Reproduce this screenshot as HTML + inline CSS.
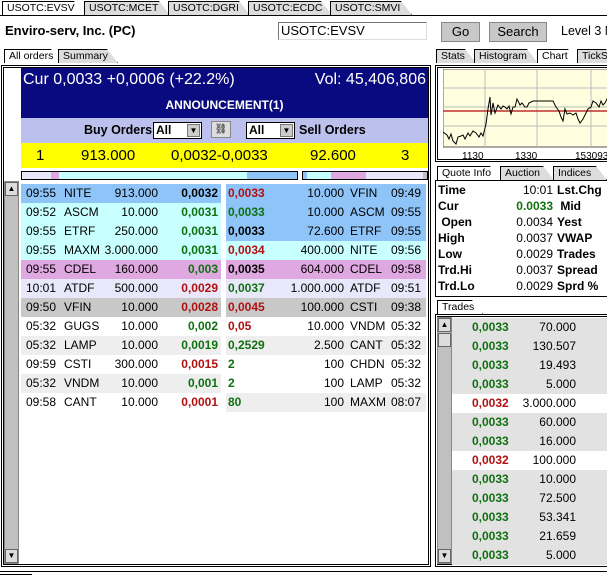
<!DOCTYPE html><html><head><style>
*{margin:0;padding:0;box-sizing:border-box}
body{width:607px;height:576px;overflow:hidden;background:#fff;font-family:"Liberation Sans",sans-serif;font-size:12px;position:relative;color:#000}
.a{position:absolute;white-space:nowrap}
.tab{position:absolute;height:14px;border:1px solid #000;border-bottom:none;background:#ddd;font-size:10.5px;line-height:13px;padding-left:4px;white-space:nowrap;overflow:hidden;clip-path:polygon(0 0,calc(100% - 11px) 0,100% 100%,0 100%)}
.tab.s{background:#fff}
.btn{position:absolute;background:#c8c8c8;border:1px solid #888;font-size:13px;text-align:center;line-height:18px}
.row{position:absolute;height:19px;line-height:19px;font-size:12px;white-space:nowrap}
.row span{position:absolute}
.g{color:#107010;font-weight:bold}.r{color:#b01010;font-weight:bold}.k{font-weight:bold}
.q{position:absolute;left:438px;width:170px;height:16px;line-height:16px;font-size:12px;white-space:nowrap}
.q span{position:absolute}
.t{position:absolute;left:452px;width:155px;height:19px;line-height:19px;font-size:12px;background:#e2e2e2}
.t span{position:absolute}
</style></head><body>
<div class="a" style="left:0;top:15px;width:607px;height:1px;background:#000"></div>
<div class="tab s" style="left:2px;top:1px;width:83px">USOTC:EVSV</div>
<div class="tab" style="left:84px;top:1px;width:86px">USOTC:MCET</div>
<div class="tab" style="left:168px;top:1px;width:82px">USOTC:DGRI</div>
<div class="tab" style="left:248px;top:1px;width:84px">USOTC:ECDC</div>
<div class="tab" style="left:330px;top:1px;width:82px">USOTC:SMVI</div>

<div class="a" style="left:4px;top:21px;width:268px;height:20px;background:#fff;font-weight:bold;font-size:13px;line-height:20px;padding-left:1px">Enviro-serv, Inc. (PC)</div>
<div class="a" style="left:278px;top:22px;width:149px;height:18px;border:1px solid #777;border-right-color:#ddd;border-bottom-color:#ddd;background:#fff;font-size:13px;line-height:16px;padding-left:2px">USOTC:EVSV</div>
<div class="btn" style="left:441px;top:22px;width:39px;height:20px">Go</div>
<div class="btn" style="left:489px;top:22px;width:58px;height:20px">Search</div>
<div class="a" style="left:561px;top:24px;font-size:12.5px">Level 3 M</div>

<div class="tab s" style="left:4px;top:49px;width:58px">All orders</div>
<div class="tab" style="left:58px;top:49px;width:60px">Summary</div>
<div class="a" style="left:1px;top:65px;width:430px;height:502px;border:3px double #000"></div>
<div class="a" style="left:4px;top:181px;width:15px;height:383px;background:#c0c0c0;border:1px solid #888"></div>
<div class="a" style="left:5px;top:182px;width:13px;height:14px;background:#ddd;border:1px solid #666;font-size:8px;text-align:center;line-height:12px">▲</div>
<div class="a" style="left:5px;top:549px;width:13px;height:14px;background:#ddd;border:1px solid #666;font-size:8px;text-align:center;line-height:12px">▼</div>

<div class="a" style="left:21px;top:68px;width:407px;height:50px;background:#0a0a80;color:#fff">
<div class="a" style="left:2px;top:3px;font-size:16px">Cur 0,0033 +0,0006 (+22.2%)</div>
<div class="a" style="right:2px;top:3px;font-size:16px">Vol: 45,406,806</div>
<div class="a" style="left:0;width:100%;top:30px;text-align:center;font-size:12px;font-weight:bold">ANNOUNCEMENT(1)</div>
</div>
<div class="a" style="left:21px;top:118px;width:407px;height:25px;background:#bcc0ec"></div>
<div class="a" style="left:84px;top:123px;font-weight:bold;font-size:12.5px">Buy Orders</div>
<div class="a" style="left:153px;top:122px;width:49px;height:17px;background:#fff;border:1px solid #000;font-weight:bold;line-height:15px;padding-left:2px">All<span class="a" style="right:1px;top:1px;width:13px;height:13px;background:#ccc;border:1px solid #777;font-size:8px;line-height:11px;text-align:center">▼</span></div>
<div class="a" style="left:211px;top:121px;width:20px;height:17px;background:#ddd;border:1px solid #888;font-size:10px;text-align:center;line-height:15px">⛓</div>
<div class="a" style="left:246px;top:122px;width:49px;height:17px;background:#fff;border:1px solid #000;font-weight:bold;line-height:15px;padding-left:2px">All<span class="a" style="right:1px;top:1px;width:13px;height:13px;background:#ccc;border:1px solid #777;font-size:8px;line-height:11px;text-align:center">▼</span></div>
<div class="a" style="left:299px;top:123px;font-weight:bold;font-size:12.5px">Sell Orders</div>

<div class="a" style="left:21px;top:143px;width:407px;height:25px;background:#ffff00;font-size:15px;line-height:25px">
<span class="a" style="left:15px">1</span><span class="a" style="left:60px">913.000</span><span class="a" style="left:150px">0,0032-0,0033</span><span class="a" style="left:289px">92.600</span><span class="a" style="left:380px">3</span></div>

<div class="a" style="left:21px;top:171px;width:277px;height:9px;border:1px solid #000;background:linear-gradient(90deg,#e8e8fa 0 29px,#e0a8e0 29px 37px,#c8ffff 37px 225px,#8ec4f8 225px)"></div>
<div class="a" style="left:302px;top:171px;width:126px;height:9px;border:1px solid #000;background:linear-gradient(90deg,#8ec4f8 0 4px,#c8ffff 4px 28px,#e0a8e0 28px 63px,#e8e8fa 63px 120px,#c0c0c0 120px)"></div>

<div id="rows"></div>

<div class="tab" style="left:436px;top:49px;width:40px">Stats</div>
<div class="tab" style="left:474px;top:49px;width:64px">Histogram</div>
<div class="tab s" style="left:537px;top:49px;width:42px">Chart</div>
<div class="tab" style="left:577px;top:49px;width:40px">TickS</div>
<div class="a" style="left:435px;top:65px;width:180px;height:97px;border:3px double #000;background:#fff"></div>
<svg class="a" style="left:443px;top:69px" width="170" height="79">
<rect x="0" y="0" width="170" height="78" fill="#ffffe0" stroke="#555"/>
<g stroke="#bbb"><line x1="42" y1="0" x2="42" y2="78"/><line x1="94" y1="0" x2="94" y2="78"/><line x1="148" y1="0" x2="148" y2="78"/><line x1="0" y1="19" x2="170" y2="19"/><line x1="0" y1="38" x2="170" y2="38"/><line x1="0" y1="57" x2="170" y2="57"/></g>
<line x1="0" y1="42" x2="170" y2="42" stroke="#c03030" stroke-width="1.5"/>
<polyline fill="none" stroke="#000" points="0,63 4,66 6,70 8,65 10,72 13,75 15,68 18,67 20,66 22,70 25,64 27,67 30,62 33,64 36,68 38,64 40,67 43,55 45,40 47,28 48,46 50,34 52,44 55,36 58,40 60,37 62,38 64,40 66,37 68,45 70,38 72,38 74,30 77,36 79,34 82,38 84,38 86,34 90,32 95,32 100,32 105,32 110,32 113,38 116,42 118,48 120,52 122,40 124,45 127,44 130,46 133,44 135,50 137,54 140,50 142,46 145,40 148,38 150,32 153,34 156,38 158,32 160,36 162,34 165,28 167,10 169,12"/>
</svg>
<div class="a" style="left:462px;top:151px;font-size:10px">1130</div>
<div class="a" style="left:515px;top:151px;font-size:10px">1330</div>
<div class="a" style="left:575px;top:151px;font-size:10px">153093</div>

<div class="tab s" style="left:437px;top:166px;width:64px">Quote Info</div>
<div class="tab" style="left:500px;top:166px;width:54px">Auction</div>
<div class="tab" style="left:553px;top:166px;width:54px">Indices</div>
<div class="a" style="left:435px;top:180px;width:180px;height:117px;border:1px solid #000;background:#fff"></div>
<div id="q"></div>

<div class="tab s" style="left:437px;top:300px;width:46px">Trades</div>
<div class="a" style="left:435px;top:314px;width:180px;height:253px;border:3px double #000;background:#fff"></div>
<div class="a" style="left:437px;top:317px;width:15px;height:247px;background:#c0c0c0;border:1px solid #888"></div>
<div class="a" style="left:438px;top:318px;width:13px;height:14px;background:#ddd;border:1px solid #666;font-size:8px;text-align:center;line-height:12px">▲</div>
<div class="a" style="left:438px;top:333px;width:13px;height:14px;background:#ddd;border:1px solid #666"></div>
<div class="a" style="left:438px;top:549px;width:13px;height:14px;background:#ddd;border:1px solid #666;font-size:8px;text-align:center;line-height:12px">▼</div>
<div id="tr"></div>
<div class="a" style="left:0;top:571px;width:607px;height:1px;background:#000"></div>
<div class="a" style="left:0;top:574px;width:32px;height:1px;background:#000"></div>

<script>
var L=[["09:55","NITE","913.000","0,0032","k","#8ec4f8","0,0033","r","10.000","VFIN","09:49","#8ec4f8"],
["09:52","ASCM","10.000","0,0031","g","#c8ffff","0,0033","g","10.000","ASCM","09:55","#8ec4f8"],
["09:55","ETRF","250.000","0,0031","g","#c8ffff","0,0033","k","72.600","ETRF","09:55","#8ec4f8"],
["09:55","MAXM","3.000.000","0,0031","g","#c8ffff","0,0034","r","400.000","NITE","09:56","#c8ffff"],
["09:55","CDEL","160.000","0,003","g","#e0a8e0","0,0035","k","604.000","CDEL","09:58","#e0a8e0"],
["10:01","ATDF","500.000","0,0029","r","#e8e8fa","0,0037","g","1.000.000","ATDF","09:51","#e8e8fa"],
["09:50","VFIN","10.000","0,0028","r","#c8c8c8","0,0045","r","100.000","CSTI","09:38","#c8c8c8"],
["05:32","GUGS","10.000","0,002","g","#fff","0,05","r","10.000","VNDM","05:32","#fff"],
["05:32","LAMP","10.000","0,0019","g","#eee","0,2529","g","2.500","CANT","05:32","#eee"],
["09:59","CSTI","300.000","0,0015","r","#fff","2","g","100","CHDN","05:32","#fff"],
["05:32","VNDM","10.000","0,001","g","#eee","2","g","100","LAMP","05:32","#fff"],
["09:58","CANT","10.000","0,0001","r","#fff","80","g","100","MAXM","08:07","#eee"]];
var h="";L.forEach(function(r,i){var y=184+i*19;
h+='<div class="row" style="left:21px;top:'+y+'px;width:200px;background:'+r[5]+'"><span style="left:5px">'+r[0]+'</span><span style="left:43px">'+r[1]+'</span><span style="right:63px">'+r[2]+'</span><span class="'+r[4]+'" style="right:3px">'+r[3]+'</span></div>';
h+='<div class="row" style="left:226px;top:'+y+'px;width:200px;background:'+r[11]+'"><span class="'+r[7]+'" style="left:2px">'+r[6]+'</span><span style="right:82px">'+r[8]+'</span><span style="left:124px">'+r[9]+'</span><span style="left:165px">'+r[10]+'</span></div>';});
document.getElementById("rows").innerHTML=h;
var Q=[["Time","10:01","Lst.Chg",""],["Cur","0.0033","&nbsp;Mid","g"],["&nbsp;Open","0.0034","Yest",""],["High","0.0037","VWAP",""],["Low","0.0029","Trades",""],["Trd.Hi","0.0037","Spread",""],["Trd.Lo","0.0029","Sprd %",""]];
h="";Q.forEach(function(r,i){h+='<div class="q" style="top:'+(182+i*16)+'px"><span class="k" style="left:0">'+r[0]+'</span><span class="'+r[3]+'" style="right:55px">'+r[1]+'</span><span class="k" style="left:119px">'+r[2]+'</span></div>';});
document.getElementById("q").innerHTML=h;
var T=[["0,0033","70.000"],["0,0033","130.507"],["0,0033","19.493"],["0,0033","5.000"],["0,0032","3.000.000"],["0,0033","60.000"],["0,0033","16.000"],["0,0032","100.000"],["0,0033","10.000"],["0,0033","72.500"],["0,0033","53.341"],["0,0033","21.659"],["0,0033","5.000"]];
h="";T.forEach(function(r,i){var red=r[0]=="0,0032";h+='<div class="t" style="top:'+(318+i*19)+'px;'+(red?'background:#fff':'')+'"><span class="'+(red?'r':'g')+'" style="left:20px">'+r[0]+'</span><span style="right:31px">'+r[1]+'</span></div>';});
document.getElementById("tr").innerHTML=h;
</script>
</body></html>
